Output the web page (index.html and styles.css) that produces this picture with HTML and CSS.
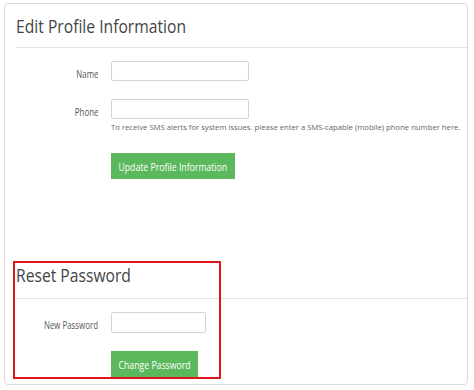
FILE: index.html
```html
<!DOCTYPE html>
<html>
<head>
    <meta charset="utf-8" />
    <title>Edit Profile Information</title>
    <link rel="stylesheet" href="styles.css">
</head>
<body>
<div class="card">
    <!-- Profile section -->
    <div class="section-head">
        <h2 class="section-title"><span class="squeeze">Edit Profile Information</span></h2>
    </div>

    <div class="form-row">
        <label class="row-label" for="name"><span class="squeeze">Name</span></label>
        <div class="row-field">
            <input class="field" id="name" type="text">
        </div>
    </div>

    <div class="form-row phone-row">
        <label class="row-label" for="phone"><span class="squeeze">Phone</span></label>
        <div class="row-field">
            <input class="field" id="phone" type="text">
            <div class="help">To receive SMS alerts for system issues. please enter a SMS-capable (mobile) phone number here.</div>
        </div>
    </div>

    <div class="form-row actions">
        <div class="row-label"></div>
        <div class="row-field">
            <button class="btn-green btn-wide"><span class="squeeze">Update Profile Information</span></button>
        </div>
    </div>

    <!-- Password section -->
    <div class="password-section">
        <div class="section-head">
            <h2 class="section-title"><span class="squeeze">Reset Password</span></h2>
        </div>

        <div class="form-row">
            <label class="row-label" for="newpass"><span class="squeeze">New Password</span></label>
            <div class="row-field">
                <input class="field field-short" id="newpass" type="password">
            </div>
        </div>

        <div class="form-row actions">
            <div class="row-label"></div>
            <div class="row-field">
                <button class="btn-green btn-narrow"><span class="squeeze">Change Password</span></button>
            </div>
        </div>

        <!-- red highlight drawn over the section -->
        <div class="highlight"></div>
    </div>
</div>
</body>
</html>
```

FILE: styles.css
```css
/* ============ Profile settings card ============ */
* {
  box-sizing: border-box;
}
body {
  margin: 0;
  padding: 3px 6px 0 4px;
  font-family: "Open Sans", "Noto Sans", sans-serif;
  background-color: #fff;
  color: #444;
}
/* the shot is a bit narrow, so text is squeezed sideways */
.squeeze {
  display: inline-block;
  white-space: nowrap;
  transform-origin: left center;
}
.card {
  height: 382px;
  border: 1px solid #dcdcdc;
  border-radius: 4px;
  padding: 9px 0 0 11px;
}
.section-head {
  border-bottom: 1px solid #e3e3e3;
  padding-bottom: 8px;
}
.section-title {
  margin: 0;
  font-size: 18px;
  line-height: 26px;
  font-weight: 400;
  color: #444;
}
.section-title .squeeze {
  transform: scaleX(0.87);
}
.form-row {
  display: flex;
  align-items: flex-start;
  margin-top: 13px;
}
.phone-row {
  margin-top: 15px;
}
.row-label {
  width: 82px;
  flex: none;
  text-align: right;
  font-size: 10.5px;
  line-height: 20px;
  padding-top: 3px;
  color: #555;
  margin-right: 13px;
}
.row-label .squeeze {
  transform: scaleX(0.75);
  transform-origin: right center;
}
.row-field {
  flex: 1;
}
.field {
  display: block;
  width: 138px;
  height: 20px;
  border: 1px solid #d4d4d4;
  border-radius: 2px;
  padding: 2px 4px;
  font-size: 10px;
}
.field-short {
  width: 95px;
  height: 21px;
}
.help {
  font-size: 7.7px;
  line-height: 12px;
  margin-top: 2px;
  color: #666;
  white-space: nowrap;
}
.actions {
  margin-top: 20px;
}
.btn-green {
  display: flex;
  align-items: center;
  justify-content: center;
  background-color: #5cb85c;
  border: none;
  color: #fff;
  height: 26px;
  padding: 0;
  font-family: inherit;
  font-size: 11px;
  cursor: pointer;
}
.btn-green .squeeze {
  transform: scaleX(0.79);
  transform-origin: center;
}
.btn-green:hover {
  background-color: #4cae4c;
}
.btn-wide {
  width: 124px;
}
.btn-narrow {
  width: 87px;
}
.password-section {
  position: relative;
  margin-top: 83px;
}
.password-section .section-head {
  padding-bottom: 10px;
}
.password-section .actions {
  margin-top: 16px;
}
.highlight {
  position: absolute;
  left: -3px;
  top: -1px;
  width: 208px;
  height: 118px;
  border: 2px solid #e0141b;
  pointer-events: none;
}
```
